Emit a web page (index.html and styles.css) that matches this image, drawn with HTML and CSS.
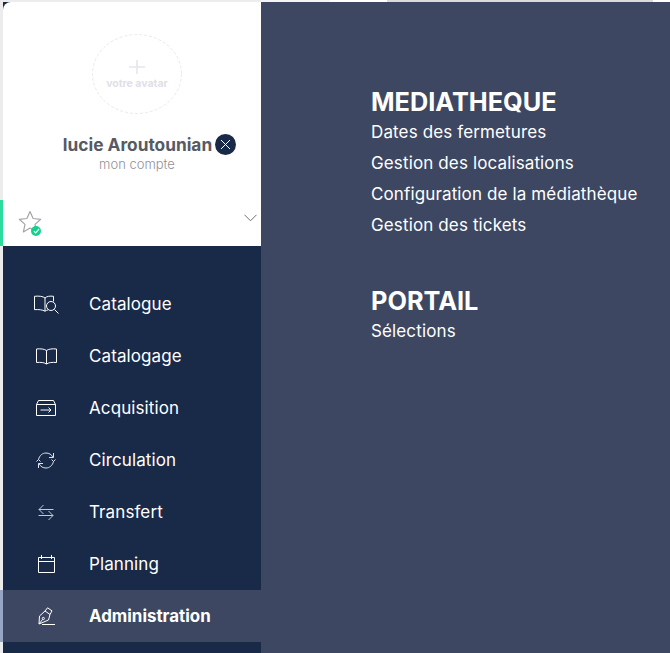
FILE: index.html
```html
<!DOCTYPE html>
<html lang="fr">
<head>
<meta charset="utf-8">
<title>Administration</title>
<link rel="stylesheet" href="styles.css">
</head>
<body>
<div class="topstrip"><span class="seg-a"></span><span class="seg-b"></span><span class="seg-c"></span><span class="seg-d"></span></div>
<div class="app">
  <aside class="sidebar">
    <section class="profile">
      <div class="avatar">
        <svg class="avatar-ring" width="92" height="82" viewBox="0 0 92 82"><ellipse cx="46" cy="40" rx="44.5" ry="39.5" fill="none" stroke="#e9eaf0" stroke-width="1" stroke-dasharray="3 2"/></svg>
        <svg class="avatar-plus" width="16" height="14" viewBox="0 0 16 14"><path d="M8 0v14M0 7h16" stroke="#e4e6ee" stroke-width="1.6" fill="none"/></svg>
        <span class="avatar-text">votre avatar</span>
      </div>
      <div class="name-row">
        <span class="name">lucie Aroutounian</span>
        <span class="close"><svg width="11" height="11" viewBox="0 0 11 11"><path d="M1 1l9 9M10 1l-9 9" stroke="#fff" stroke-width="1" fill="none"/></svg></span>
      </div>
      <div class="account">mon compte</div>
    </section>
    <section class="status">
      <span class="star">
        <svg width="24" height="24" viewBox="0 0 24 24"><path d="M12 1.5l3.100 7 7.600.8-5.700 5.100 1.600 7.500L12 18.100l-6.600 3.800L7 14.400 1.300 9.300l7.600-.8z" fill="none" stroke="#a3a5aa" stroke-width="1.200" stroke-linejoin="round"/></svg>
        <span class="badge"><svg viewBox="0 0 8 7"><path d="M1 3.600l2 2L7 1.200" stroke="#fff" stroke-width="1.400" fill="none"/></svg></span>
      </span>
      <svg class="chevron" width="13" height="8" viewBox="0 0 13 8"><path d="M.5 .8L6.500 6.800 12.500 .8" stroke="#6b6e76" stroke-width="1" fill="none"/></svg>
    </section>
    <nav class="nav">
      <a class="nav-item"><span class="nav-icon"><svg width="25" height="19" viewBox="0 0 25 19" fill="none" stroke="#fff" stroke-width="1"><path d="M11 3C9 1.300 5 .8 .5 1.300v13.400c4-.4 8 0 10.500 1.500 1-.7 2-1.100 3-1.300M11 3C12.500 1.300 16 .8 19.500 1.300v5.200M11 3v13.200"/><circle cx="17" cy="11" r="4.500"/><path d="M20.500 14.500l4 4"/></svg></span><span>Catalogue</span></a>
      <a class="nav-item"><span class="nav-icon"><svg width="21" height="17" viewBox="0 0 21 17" fill="none" stroke="#fff" stroke-width="1"><path d="M10.500 2.500C8.500 1 4.500 .5 .5 1v13.500c4-.4 8 0 10 1.500 2-1.500 6-1.900 10-1.500V1c-4-.5-8 0-10 1.500zM10.500 2.500V16"/></svg></span><span>Catalogage</span></a>
      <a class="nav-item"><span class="nav-icon"><svg width="20" height="16" viewBox="0 0 20 16" fill="none" stroke="#fff" stroke-width="1"><path d="M.5 4.500h19v11H.5zM.5 4.500L2.500 .5h15l2 4"/><path d="M4.500 10H15M12.500 7.500L15 10l-2.500 2.500"/></svg></span><span>Acquisition</span></a>
      <a class="nav-item"><span class="nav-icon"><svg width="20" height="17" viewBox="0 0 20 17" fill="none" stroke="#dfe2ea" stroke-width="1"><path d="M2.500 7.500C3.500 3.500 6.500 1 10 1c3 0 5.500 1.300 7 4.500M17.500 1v4.500H13M17.500 9.500C16.500 13.500 13.500 16 10 16c-3 0-5.500-1.300-7-4.500M2.500 16v-4.500H7M.5 9.500l2-2 2 2M15.500 7.500l2 2 2-2"/></svg></span><span>Circulation</span></a>
      <a class="nav-item"><span class="nav-icon"><svg width="16" height="17" viewBox="0 0 16 17" fill="none" stroke="#c6cad6" stroke-width="1"><path d="M15.500 5.500H1M5.500 1L1 5.500l4.500 4.500M.5 11.500H15M10.500 7l4.500 4.500L10.500 16"/></svg></span><span>Transfert</span></a>
      <a class="nav-item"><span class="nav-icon"><svg width="17" height="18" viewBox="0 0 17 18" fill="none" stroke="#fff" stroke-width="1"><path d="M.5 2.500h16v15H.5zM.5 6.500h16M3.500 0v4M13.500 0v4"/></svg></span><span>Planning</span></a>
      <a class="nav-item is-active"><span class="nav-icon"><svg width="17" height="18" viewBox="0 0 17 18" fill="none" stroke="#fff" stroke-width="1"><path d="M1 17L1.500 9 7 4l5 3.500-1.500 5.500zM7 4L9.500 .8l4.500 3-2 3.700M1 17l3.500-4.500"/><circle cx="5.300" cy="11.500" r="1.100"/><path d="M4 17.500h13"/></svg></span><span>Administration</span></a>
    </nav>
  </aside>
  <main class="content">
    <section class="group">
      <h2>MEDIATHEQUE</h2>
      <a>Dates des fermetures</a>
      <a>Gestion des localisations</a>
      <a>Configuration de la médiathèque</a>
      <a>Gestion des tickets</a>
    </section>
    <section class="group">
      <h2>PORTAIL</h2>
      <a>Sélections</a>
    </section>
  </main>
</div>
</body>
</html>
```
FILE: styles.css
```css
* { box-sizing: border-box; }
html, body { margin: 0; height: 653px; overflow: hidden; }
body { background: #ececec; font-family: "Inter", "Open Sans", sans-serif; color: #fff; position: relative; }
.topstrip { height: 2px; display: flex; margin-left: 261px; }
.seg-a { width: 69px; background: #f4f4f4; }
.seg-b { width: 57px; background: #fff; }
.seg-c { width: 266px; background: #dcdcdc; }
.seg-d { flex: 1; background: #fff; }
.app { display: flex; height: 651px; margin-left: 3px; }
.sidebar { width: 258px; background: #192948; display: flex; flex-direction: column; }
.profile { height: 198px; background: #fff; border-top-left-radius: 8px; padding-top: 32px; display: flex; flex-direction: column; align-items: center; }
.avatar { position: relative; width: 92px; height: 82px; margin-left: 10px; display: flex; flex-direction: column; align-items: center; }
.avatar-ring { position: absolute; left: 0; top: 0; }
.avatar-plus { margin-top: 26px; }
.avatar-text { font-size: 10.500px; font-weight: 700; color: #dfe0e8; margin-top: 3px; line-height: 13px; }
.name-row { margin-top: 16px; height: 24px; display: flex; align-items: center; gap: 3px; margin-left: 35px; }
.name { font-size: 17.300px; font-weight: 700; color: #565a63; }
.close { width: 21px; height: 21px; border-radius: 50%; background: #192948; display: flex; align-items: center; justify-content: center; }
.account { font-size: 13px; font-weight: 300; color: #8f9299; line-height: 16px; margin-left: 10px; }
.status { position: relative; height: 46px; background: #fff; display: flex; justify-content: space-between; align-items: flex-start; padding: 10px 4px 0 15px; }
.status::before { content: ""; position: absolute; left: -3px; top: 0; width: 3px; height: 46px; background: #2bdc9c; }
.star { position: relative; width: 24px; height: 24px; display: block; }
.badge { position: absolute; right: 1px; bottom: -2px; width: 10px; height: 10px; border-radius: 50%; background: #13d08c; display: flex; align-items: center; justify-content: center; }
.badge svg { width: 7px; height: 6px; }
.chevron { margin-top: 4px; }
.nav { padding-top: 32px; display: flex; flex-direction: column; }
.nav-item { position: relative; height: 52px; display: flex; align-items: center; font-size: 17px; font-weight: 400; letter-spacing: .1px; color: #fff; padding-left: 30px; }
.nav-icon { width: 26px; margin-right: 30px; display: flex; justify-content: center; }
.nav-item.is-active { background: #3d4762; font-weight: 700; letter-spacing: 0; font-size: 16.900px; }
.nav-item.is-active::before { content: ""; position: absolute; left: -3px; top: 0; width: 3px; height: 52px; background: #97a5c4; }
.content { flex: 1; background: #3d4762; padding: 85px 0 0 110px; display: flex; flex-direction: column; gap: 45px; }
.group { display: flex; flex-direction: column; }
.group h2 { margin: 0 0 1px; font-size: 25.300px; line-height: 29px; font-weight: 700; color: #fff; }
.group a { font-size: 17px; line-height: 31px; letter-spacing: .13px; color: #fff; }
```
